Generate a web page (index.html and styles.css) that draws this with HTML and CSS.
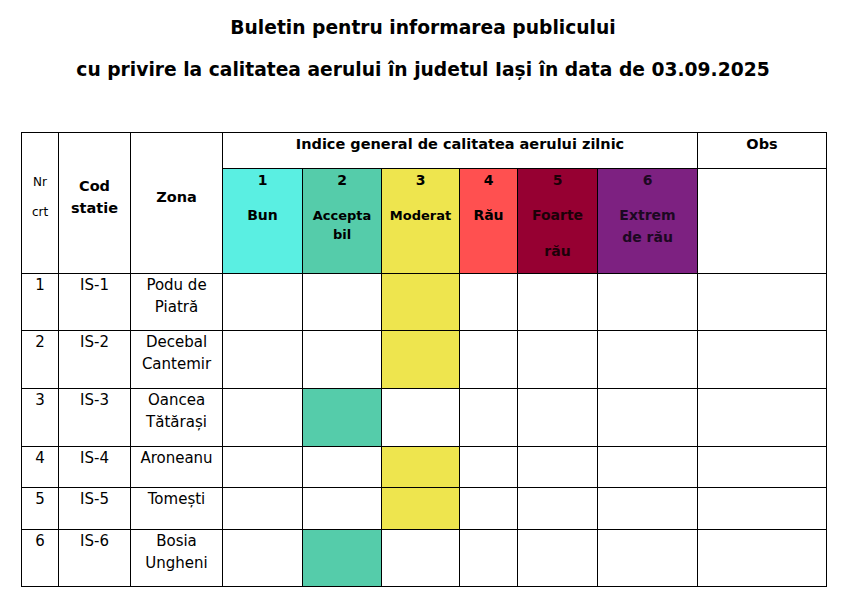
FILE: index.html
```html
<!DOCTYPE html>
<html lang="ro">
<head>
<meta charset="utf-8">
<title>Buletin calitatea aerului</title>
<link rel="stylesheet" href="styles.css">
</head>
<body>
<div class="titles">
  <div class="title">Buletin pentru informarea publicului</div>
  <div class="title">cu privire la calitatea aerului în judetul Iași în data de 03.09.2025</div>
</div>
<table class="grid">
  <colgroup>
    <col class="w1"><col class="w2"><col class="w3"><col class="w4"><col class="w5">
    <col class="w6"><col class="w7"><col class="w8"><col class="w9"><col class="w10">
  </colgroup>
  <tr class="h1">
    <td rowspan="2" class="mid nr"><div>Nr</div><div class="crt">crt</div></td>
    <td rowspan="2" class="mid hb">Cod<br>statie</td>
    <td rowspan="2" class="mid hb">Zona</td>
    <td colspan="6" class="hb top">Indice general de calitatea aerului zilnic</td>
    <td class="hb top">Obs</td>
  </tr>
  <tr class="h2">
    <td class="lv l1"><div class="num">1</div><div class="lbl">Bun</div></td>
    <td class="lv l2"><div class="num">2</div><div class="lbl sm">Accepta<br>bil</div></td>
    <td class="lv l3"><div class="num">3</div><div class="lbl sm">Moderat</div></td>
    <td class="lv l4"><div class="num">4</div><div class="lbl">Rău</div></td>
    <td class="lv l5"><div class="num">5</div><div class="lbl wide">Foarte<br>rău</div></td>
    <td class="lv l6"><div class="num">6</div><div class="lbl">Extrem<br>de rău</div></td>
    <td></td>
  </tr>
  <tr class="r1">
    <td>1</td><td>IS-1</td><td>Podu de<br>Piatră</td>
    <td></td><td></td><td class="f3"></td><td></td><td></td><td></td><td></td>
  </tr>
  <tr class="r2">
    <td>2</td><td>IS-2</td><td>Decebal<br>Cantemir</td>
    <td></td><td></td><td class="f3"></td><td></td><td></td><td></td><td></td>
  </tr>
  <tr class="r3">
    <td>3</td><td>IS-3</td><td>Oancea<br>Tătărași</td>
    <td></td><td class="f2"></td><td></td><td></td><td></td><td></td><td></td>
  </tr>
  <tr class="r4">
    <td>4</td><td>IS-4</td><td>Aroneanu</td>
    <td></td><td></td><td class="f3"></td><td></td><td></td><td></td><td></td>
  </tr>
  <tr class="r5">
    <td>5</td><td>IS-5</td><td>Tomești</td>
    <td></td><td></td><td class="f3"></td><td></td><td></td><td></td><td></td>
  </tr>
  <tr class="r6">
    <td>6</td><td>IS-6</td><td>Bosia<br>Ungheni</td>
    <td></td><td class="f2"></td><td></td><td></td><td></td><td></td><td></td>
  </tr>
</table>
</body>
</html>
```
FILE: styles.css
```css
html, body {
  margin: 0;
  padding: 0;
  background: #fff;
}
body {
  font-family: "DejaVu Sans", Verdana, sans-serif;
  color: #000;
}
.titles {
  padding-top: 7px;
  text-align: center;
}
.title {
  font-weight: bold;
  font-size: 18.7px;
  line-height: 42px;
}
.grid {
  margin: 41px 0 0 21px;
  width: 805px;
  border-collapse: collapse;
  table-layout: fixed;
}
.w1 { width: 37px; }
.w2 { width: 72px; }
.w3 { width: 92px; }
.w4 { width: 80px; }
.w5 { width: 79px; }
.w6 { width: 78px; }
.w7 { width: 58px; }
.w8 { width: 80px; }
.w9 { width: 100px; }
.w10 { width: 129px; }
.grid td {
  border: 1.3px solid #000;
  padding: 0;
  text-align: center;
  vertical-align: top;
  font-size: 15px;
  line-height: 22px;
}
.grid td.mid {
  vertical-align: middle;
  padding-bottom: 13px;
}
.grid td.hb {
  font-weight: bold;
  font-size: 14.5px;
}
.grid td.top {
  padding-top: 0;
}
.grid td.nr {
  font-size: 12px;
  line-height: 16px;
}
.nr .crt {
  margin-top: 14px;
}
.h1 { height: 36px; }
.h2 { height: 105px; }
.r1 { height: 57px; }
.r2 { height: 58px; }
.r3 { height: 58px; }
.r4 { height: 41px; }
.r5 { height: 42px; }
.r6 { height: 57px; }
.lv {
  font-weight: bold;
}
.lv .num {
  font-size: 14px;
  line-height: 20px;
  padding-top: 1px;
}
.lv .lbl {
  margin-top: 14px;
  font-size: 14px;
  line-height: 22px;
}
.lv .lbl.sm {
  font-size: 13px;
  line-height: 19px;
  margin-top: 16px;
}
.lv .lbl.wide {
  line-height: 36px;
  margin-top: 7px;
}
.l1 { background: #5aefe2; }
.l2 { background: #55ccaa; }
.l3 { background: #eee54e; }
.l4 { background: #ff5050; }
.l5 { background: #960032; color: #1c0008; }
.l6 { background: #7d2181; color: #1c0822; }
.f2 { background: #55ccaa; }
.f3 { background: #eee54e; }
```
